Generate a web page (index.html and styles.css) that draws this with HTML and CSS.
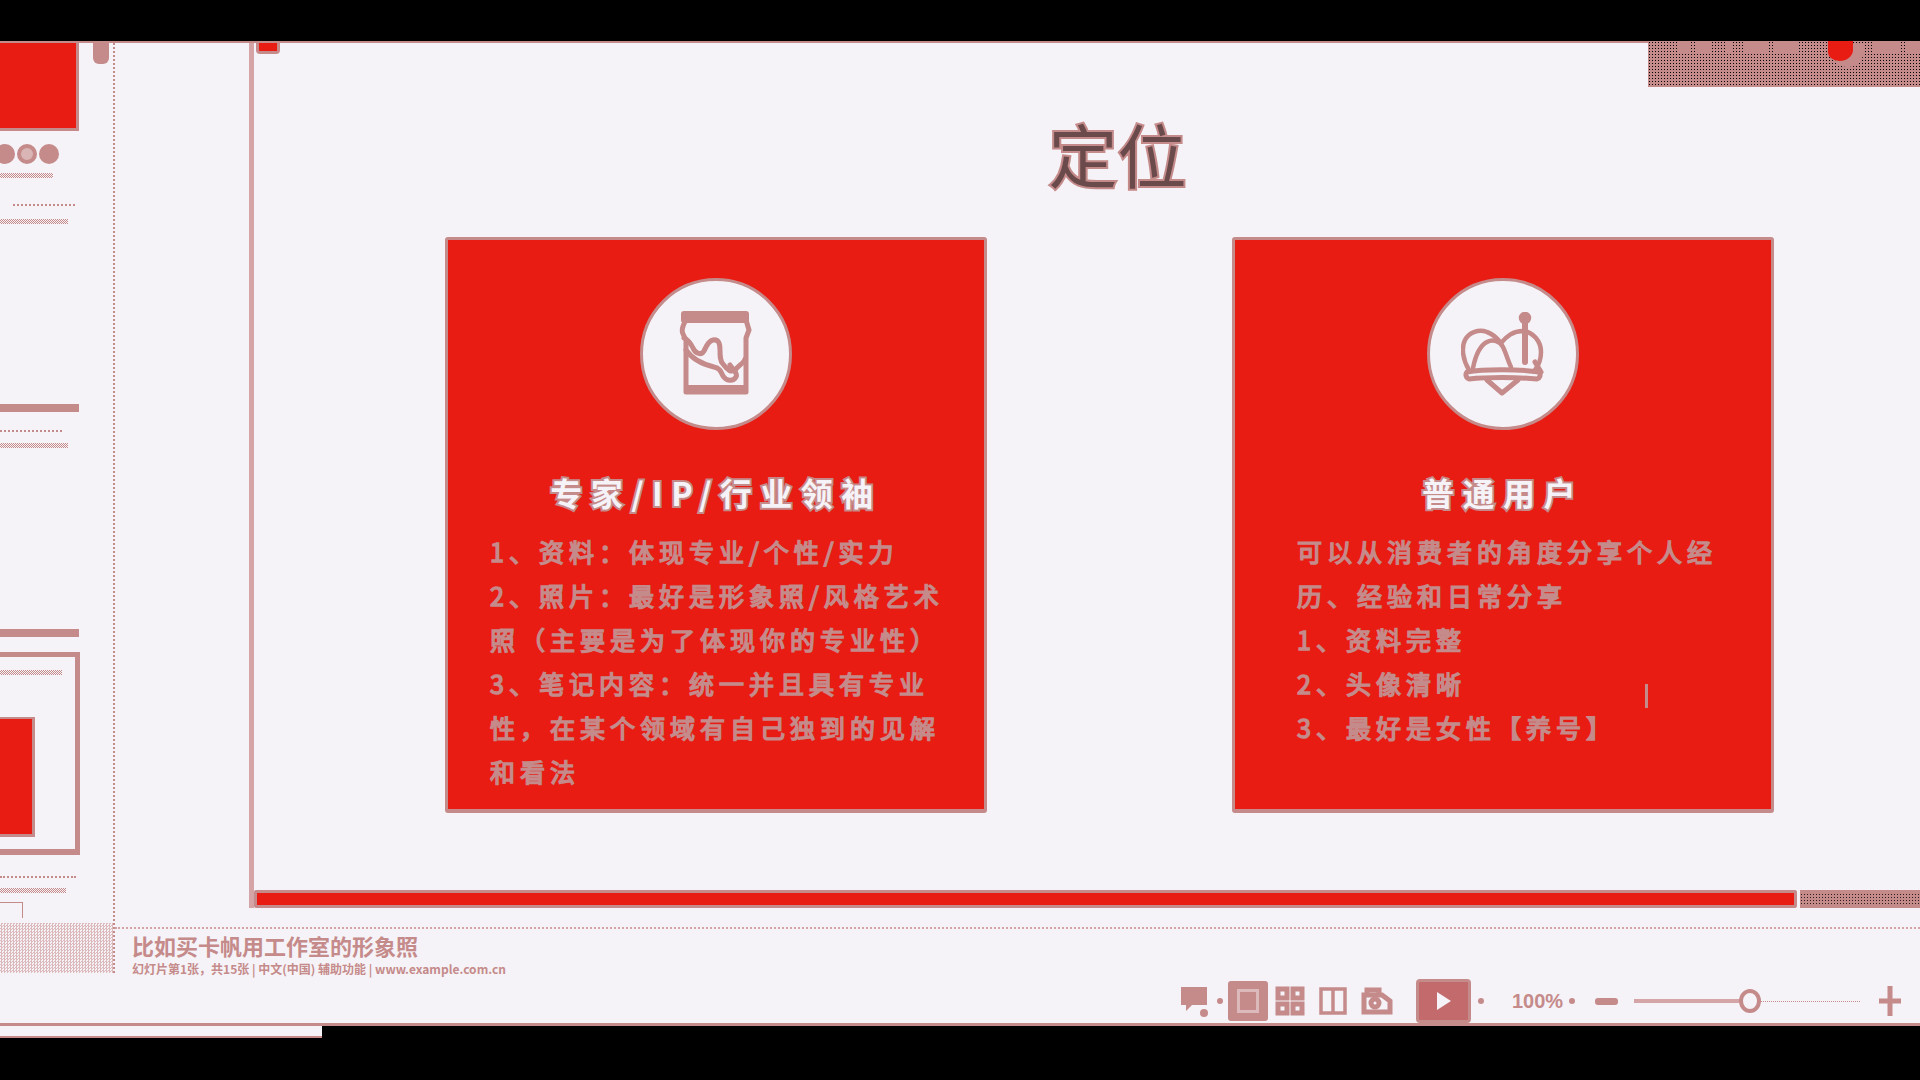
FILE: index.html
```html
<!DOCTYPE html>
<html lang="zh-CN">
<head>
    <meta charset="UTF-8">
    <title>定位</title>
    <link rel="stylesheet" href="styles.css">
</head>
<body>
    <div class="top-black"></div>
    <div class="window">
        <aside class="sidebar">
            <div class="scroll-pill"></div>
            <div class="thumb-red"></div>
            <div class="thumb-dots"><span></span><span class="ring"></span><span></span></div>
            <div class="side-line w53 mt9"></div>
            <div class="side-dotted w62 ml13 mt26"></div>
            <div class="side-line w68 mt13"></div>
            <div class="side-bar mt180"></div>
            <div class="side-dotted w62 mt18"></div>
            <div class="side-line w68 mt11"></div>
            <div class="side-bar mt181"></div>
            <div class="thumb-box">
                <div class="side-line w62 mt12"></div>
                <div class="thumb-box-red"></div>
            </div>
            <div class="side-dotted w76 mt21"></div>
            <div class="side-line w66 mt10"></div>
            <div class="side-small"></div>
            <div class="side-patch"></div>
        </aside>
        <main class="main">
            <div class="stage">
                <section class="slide">
                    <div class="red-tab"></div>
                    <div class="corner-box">
                        <span class="blob b1"></span><span class="blob b2"></span><span class="blob b3"></span>
                        <span class="blob b4"></span><span class="blob b5"></span>
                        <span class="blob-red"></span>
                        <span class="blob b6"></span><span class="blob b7"></span>
                    </div>
                    <h1 class="title">定位</h1>
                    <div class="cards">
                        <div class="card">
                            <div class="circle">
                                <svg width="76" height="88" viewBox="0 0 76 88" fill="none" stroke="#c58a8a" stroke-width="5" stroke-linejoin="round" stroke-linecap="round">
                                    <path d="M6 4h62v6H6z" stroke-width="6"/>
                                    <path d="M8 10c-3 5-5 10-3 14l3 6v52h60V28l3-8-3-10"/>
                                    <path d="M6 28c5 2 7 6 9 10 2 5 8 8 11 3 2-4 4-10 9-11 6-1 7 4 7 10 0 6 0 11 3 14 4 5 8 10 13 5 3-4 8-6 9-10"/>
                                    <path d="M8 40c6 9 16 14 28 17 6 1 7 5 9 9 3 5 10 6 13 1 2-3-3-8-6-12"/>
                                    <path d="M10 78h56" stroke-width="6"/>
                                </svg>
                            </div>
                            <h2 class="card-title">专家/IP/行业领袖</h2>
                            <p class="card-text">1、资料：体现专业/个性/实力<br>2、照片：最好是形象照/风格艺术<br>照（主要是为了体现你的专业性）<br>3、笔记内容：统一并且具有专业<br>性，在某个领域有自己独到的见解<br>和看法</p>
                        </div>
                        <div class="card card-right">
                            <div class="circle">
                                <svg width="84" height="84" viewBox="0 0 84 84" fill="none" stroke="#c58a8a" stroke-width="4.5" stroke-linejoin="round" stroke-linecap="round">
                                    <path d="M8 58C2 48 0 36 4 28c4-8 14-11 22-8 6 2 10 6 14 11 6-7 12-12 22-12 10 1 18 10 18 21 0 7-2 13-6 18"/>
                                    <path d="M12 56c2-10 6-22 14-26 6-3 13-1 16 5 3 6 5 14 8 20"/>
                                    <path d="M64 4v46" stroke-width="6"/>
                                    <circle cx="64" cy="6" r="4" fill="#c58a8a"/>
                                    <path d="M6 60c16-3 52-3 72 0 2 3 1 6-2 7-20-2-50-2-68 0-3-1-4-5-2-7z" stroke-width="5"/>
                                    <path d="M74 50l6 10M26 68l15 13 16-13" stroke-width="5"/>
                                </svg>
                            </div>
                            <h2 class="card-title">普通用户</h2>
                            <p class="card-text">可以从消费者的角度分享个人经<br>历、经验和日常分享<br>1、资料完整<br>2、头像清晰<br>3、最好是女性【养号】</p>
                            <span class="cursor"></span>
                        </div>
                    </div>
                    <div class="progress">
                        <div class="progress-red"></div>
                        <div class="progress-rest"></div>
                    </div>
                </section>
            </div>
            <div class="notes">
                <div class="notes-title">比如买卡帆用工作室的形象照</div>
                <div class="notes-sub">幻灯片第1张，共15张 | 中文(中国) 辅助功能 | www.example.com.cn</div>
            </div>
            <div class="toolbar">
                <svg class="tool" width="30" height="32" viewBox="0 0 30 32"><path d="M1 2h26v18H12l-6 6v-6H1z" fill="#c58a8a"/><circle cx="24" cy="28" r="4" fill="#c58a8a"/></svg>
                <span class="tool-dot"></span>
                <div class="tool-active"><span></span></div>
                <svg class="tool tool-tight" width="30" height="30" viewBox="0 0 30 30" fill="none" stroke="#c58a8a" stroke-width="5"><rect x="3" y="3" width="9" height="9"/><rect x="18" y="3" width="9" height="9"/><rect x="3" y="18" width="9" height="9"/><rect x="18" y="18" width="9" height="9"/></svg>
                <svg class="tool" width="28" height="30" viewBox="0 0 28 30" fill="none" stroke="#c58a8a" stroke-width="3.5"><rect x="2" y="3" width="24" height="24"/><path d="M14 3v24"/></svg>
                <svg class="tool" width="32" height="28" viewBox="0 0 32 28" fill="none" stroke="#c58a8a" stroke-width="5"><path d="M6 6V3h12v6"/><path d="M3 8h18l8 6v11H3z"/><circle cx="14" cy="16" r="4"/></svg>
                <div class="play"><svg width="16" height="20" viewBox="0 0 16 20"><path d="M1 1l14 9-14 9z" fill="#f5f3f7"/></svg></div>
                <span class="tool-dot"></span>
                <span class="zoom-text">100%</span>
                <span class="tool-dot"></span>
                <span class="minus"></span>
                <div class="slider"><span class="slider-fill"></span><span class="slider-knob"></span></div>
                <svg class="plus" width="24" height="32" viewBox="0 0 24 32"><path d="M12 1v30M1 16h22" stroke="#c58a8a" stroke-width="5"/></svg>
            </div>
        </main>
    </div>
    <div class="tab"></div>
</body>
</html>
```

FILE: styles.css
```css
* {
    box-sizing: border-box;
}
html, body {
    margin: 0;
    height: 1080px;
    overflow: hidden;
    background: #000;
    font-family: "Noto Sans CJK SC", "Liberation Sans", sans-serif;
}
.top-black {
    height: 41px;
}
.window {
    display: flex;
    height: 985px;
    background: #f5f3f7;
    border-top: 2px solid #c58a8a;
    border-bottom: 3px solid #c58a8a;
}
.tab {
    width: 322px;
    height: 12px;
    background: #f5f3f7;
    border-bottom: 2px solid #c58a8a;
}

/* left thumbnails */
.sidebar {
    position: relative;
    width: 115px;
    height: 930px;
    flex: none;
    border-right: 2px dotted #c58a8a;
}
.scroll-pill {
    position: absolute;
    top: 0;
    left: 93px;
    width: 16px;
    height: 21px;
    background: #c58a8a;
    border-radius: 0 0 6px 6px;
}
.thumb-red {
    width: 79px;
    height: 88px;
    background: #e81c13;
    border: solid #c58a8a;
    border-width: 0 3px 3px 0;
}
.thumb-dots {
    display: flex;
    gap: 2px;
    margin: 13px 0 0 -5px;
}
.thumb-dots span {
    width: 20px;
    height: 20px;
    border-radius: 50%;
    background: #c58a8a;
}
.thumb-dots .ring {
    background: #d9b5b5;
    border: 4px solid #c58a8a;
}
.side-line {
    height: 5px;
    background-image: conic-gradient(#c58a8a 25%, transparent 0 50%, #c58a8a 0 75%, transparent 0);
    background-size: 2px 2px;
}
.side-dotted {
    border-top: 2px dotted #c58a8a;
}
.side-bar {
    width: 79px;
    height: 8px;
    background: #c58a8a;
}
.w53 { width: 53px; }
.w62 { width: 62px; }
.w66 { width: 66px; }
.w68 { width: 68px; }
.w76 { width: 76px; }
.ml13 { margin-left: 13px; }
.mt9 { margin-top: 9px; }
.mt10 { margin-top: 10px; }
.mt11 { margin-top: 11px; }
.mt12 { margin-top: 12px; }
.mt13 { margin-top: 13px; }
.mt18 { margin-top: 18px; }
.mt21 { margin-top: 21px; }
.mt26 { margin-top: 26px; }
.mt180 { margin-top: 180px; }
.mt181 { margin-top: 181px; }
.thumb-box {
    width: 80px;
    height: 203px;
    margin-top: 15px;
    padding-top: 1px;
    border: solid #c58a8a;
    border-width: 5px 5px 6px 0;
}
.thumb-box-red {
    width: 35px;
    height: 120px;
    margin-top: 42px;
    background: #e81c13;
    border: solid #c58a8a;
    border-width: 2px 3px 3px 0;
}
.side-small {
    width: 23px;
    height: 16px;
    margin-top: 9px;
    border: solid #c58a8a;
    border-width: 1px 1px 0 0;
}
.side-patch {
    position: absolute;
    left: 0;
    bottom: 0;
    width: 113px;
    height: 50px;
    background-image: conic-gradient(#dcb9bb 25%, transparent 0 50%, #dcb9bb 0 75%, transparent 0);
    background-size: 3px 3px;
}

/* slide */
.main {
    flex: 1;
    display: flex;
    flex-direction: column;
    min-width: 0;
}
.stage {
    flex: none;
    height: 865px;
    padding-left: 134px;
}
.slide {
    position: relative;
    display: flex;
    flex-direction: column;
    height: 100%;
    border-left: 5px solid #d4a4a6;
}
.red-tab {
    position: absolute;
    top: 0;
    left: 2px;
    width: 24px;
    height: 11px;
    background: #e81c13;
    border: solid #c58a8a;
    border-width: 0 3px 3px 3px;
    border-radius: 0 0 4px 4px;
}
.corner-box {
    position: absolute;
    top: -2px;
    right: 0;
    display: flex;
    gap: 6px;
    width: 272px;
    height: 46px;
    padding-left: 30px;
    background-color: #c58a8a;
    background-image: radial-gradient(#000 0.8px, transparent 1px);
    background-size: 3px 3px;
}
.blob {
    height: 12px;
    background: #c58a8a;
}
.b1 { width: 14px; }
.b2 { width: 22px; }
.b3 { width: 10px; margin-left: 8px; }
.b4 { width: 30px; margin-left: 6px; }
.b5 { width: 32px; }
.blob-red {
    width: 32px;
    height: 20px;
    margin-left: 24px;
    background: #e81c13;
    border-radius: 0 0 60% 50%;
    box-shadow: 8px 4px 0 2px #c58a8a;
}
.b6 { width: 34px; margin-left: 14px; }
.b7 { width: 20px; }
.title {
    flex: none;
    height: 194px;
    margin: 0;
    padding: 76px 0 0 61px;
    text-align: center;
    font-size: 69px;
    line-height: 68px;
    font-weight: 400;
    color: #6b4a4c;
    -webkit-text-stroke: 4px #c58a8a;
    paint-order: stroke fill;
}
.cards {
    display: flex;
    gap: 245px;
    padding-left: 191px;
}
.card {
    position: relative;
    width: 542px;
    height: 576px;
    padding-top: 38px;
    background: #e81c13;
    border: 3px solid #c58a8a;
    border-bottom-width: 4px;
    border-radius: 3px;
    color: #c58a8a;
}
.circle {
    display: flex;
    align-items: center;
    justify-content: center;
    width: 152px;
    height: 152px;
    margin: 0 auto;
    background: #f5f3f7;
    border: 3px solid #c58a8a;
    border-radius: 50%;
}
.card-title {
    margin: 40px 0 0;
    text-align: center;
    font-size: 32px;
    line-height: 44px;
    font-weight: 700;
    letter-spacing: 8.5px;
    color: #f5f3f7;
    -webkit-text-stroke: 4px #c58a8a;
    paint-order: stroke fill;
}
.card-text {
    margin: 15px 0 0;
    padding-left: 42px;
    font-size: 25px;
    line-height: 44px;
    letter-spacing: 5px;
    white-space: nowrap;
    -webkit-text-stroke: 1.5px #c58a8a;
}
.card-right .card-text {
    padding-left: 62px;
}
.cursor {
    position: absolute;
    top: 444px;
    left: 410px;
    width: 3px;
    height: 24px;
    background: #c58a8a;
}
.progress {
    display: flex;
    gap: 3px;
    margin-top: auto;
    height: 18px;
}
.progress-red {
    width: 1543px;
    background: #e81c13;
    border: 3px solid #c58a8a;
    border-radius: 2px;
}
.progress-rest {
    flex: 1;
    background-color: #c58a8a;
    background-image: radial-gradient(#2a1a1c 0.8px, transparent 1px);
    background-size: 3px 3px;
    border: solid #c58a8a;
    border-width: 3px 0;
}

/* notes */
.notes {
    flex: none;
    height: 51px;
    margin-top: 19px;
    padding: 2px 0 0 17px;
    border-top: 2px dotted #d4a4a6;
    color: #c58a8a;
}
.notes-title {
    font-size: 22px;
    line-height: 28px;
    font-weight: 700;
}
.notes-sub {
    margin-top: 3px;
    font-size: 12px;
    line-height: 14px;
    font-weight: 700;
}

/* bottom toolbar */
.toolbar {
    flex: none;
    display: flex;
    align-items: center;
    height: 44px;
    margin-top: auto;
    padding-right: 18px;
    justify-content: flex-end;
}
.tool {
    flex: none;
    margin-left: 14px;
}
.tool-tight {
    margin-left: 7px;
}
.tool-dot {
    flex: none;
    width: 6px;
    height: 6px;
    margin-left: 7px;
    border-radius: 50%;
    background: #c58a8a;
}
.tool-active {
    flex: none;
    display: flex;
    align-items: center;
    justify-content: center;
    width: 40px;
    height: 40px;
    margin-left: 5px;
    background: #c58a8a;
    border-radius: 3px;
}
.tool-active span {
    width: 22px;
    height: 24px;
    border: 3px solid #dcb9bb;
}
.play {
    flex: none;
    display: flex;
    align-items: center;
    justify-content: center;
    width: 55px;
    height: 44px;
    margin-left: 23px;
    background: #c26a6c;
    border: 3px solid #c58a8a;
    border-radius: 4px;
}
.zoom-text {
    flex: none;
    width: 50px;
    margin-left: 28px;
    font-family: "Liberation Sans", sans-serif;
    font-size: 20px;
    font-weight: 700;
    white-space: nowrap;
    color: #c58a8a;
}
.minus {
    flex: none;
    width: 23px;
    height: 7px;
    margin-left: 20px;
    border-radius: 3px;
    background: #c58a8a;
}
.slider {
    flex: none;
    display: flex;
    align-items: center;
    width: 226px;
    height: 2px;
    margin-left: 16px;
    border-bottom: 1px dotted #c58a8a;
}
.slider-fill {
    width: 105px;
    height: 4px;
    background: #d4a4a6;
}
.slider-knob {
    flex: none;
    width: 22px;
    height: 24px;
    border: 4px solid #c58a8a;
    border-radius: 50%;
    background: #f5f3f7;
}
.plus {
    flex: none;
    margin-left: 18px;
}
```
